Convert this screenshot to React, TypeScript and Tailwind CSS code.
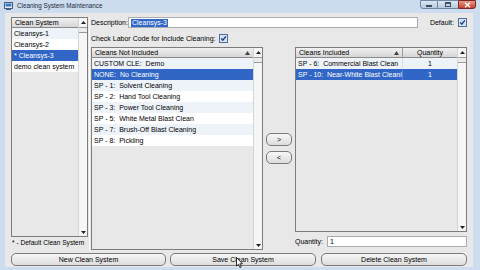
import React from "react";

const Tri = ({ down = false }: { down?: boolean }) => (
  <svg width="5" height="3" viewBox="0 0 5 3">
    <path d={down ? "M0 0H5L2.5 3Z" : "M0 3H5L2.5 0Z"} fill="#222" />
  </svg>
);

const SortTri = () => (
  <svg width="5" height="4" viewBox="0 0 5 4">
    <path d="M0 4H5L2.5 0Z" fill="#444" />
  </svg>
);

const Check = () => (
  <svg width="9" height="9" viewBox="0 0 9 9">
    <rect x="0.5" y="0.5" width="8" height="8" fill="#e3edf9" stroke="#4c6e9c" />
    <rect x="1.5" y="1.5" width="6" height="6" fill="#cfe0f4" />
    <path d="M2.2 4.4L3.8 6.2L6.9 2.3" fill="none" stroke="#1d3b73" strokeWidth="1.3" />
  </svg>
);

function Scrollbar() {
  return (
    <div className="w-[9px] flex flex-col bg-[#f6f6f6] border-l border-[#d4d4d4]">
      <div className="h-[10px] flex items-center justify-center border-b border-[#9a9a9a]">
        <Tri />
      </div>
      <div className="h-[5px] border-b border-[#9a9a9a] bg-[#ececec]" />
      <div className="flex-1" />
      <div className="h-[8px] flex items-center justify-center">
        <Tri down />
      </div>
    </div>
  );
}

const Row = ({ text, sel, alt }: { text: string; sel?: boolean; alt?: boolean }) => (
  <div
    className={
      "h-[11px] flex items-center pl-[2px] whitespace-pre overflow-hidden " +
      (sel ? "bg-[#3166c6] text-white" : alt ? "bg-[#eef3fa]" : "bg-white")
    }
  >
    {text}
  </div>
);

const Header = ({ children }: { children: React.ReactNode }) => (
  <div className="h-[10px] flex items-center px-[3px] bg-gradient-to-b from-[#f1f1f1] to-[#d6d6d6] border-b border-[#8a8a8a]">
    {children}
  </div>
);

const Btn = ({ children, className = "" }: { children: React.ReactNode; className?: string }) => (
  <div
    className={
      "h-[13px] flex items-center justify-center rounded-[5px] border border-[#7a7a7a] bg-gradient-to-b from-[#f6f6f6] to-[#dddddd] " +
      className
    }
  >
    {children}
  </div>
);

export default function App() {
  const notIncluded = [
    "CUSTOM CLE:  Demo",
    "NONE:  No Cleaning",
    "SP - 1:  Solvent Cleaning",
    "SP - 2:  Hand Tool Cleaning",
    "SP - 3:  Power Tool Cleaning",
    "SP - 5:  White Metal Blast Clean",
    "SP - 7:  Brush-Off Blast Cleaning",
    "SP - 8:  Pickling",
  ];
  return (
    <div className="relative w-[480px] h-[270px] flex flex-col bg-[#cddcee] text-[7px] leading-none text-black overflow-hidden font-['Liberation_Sans',Arial,sans-serif]">
      {/* Title bar */}
      <div className="h-[13px] flex items-start">
        <div className="pl-[4px] pt-[2px]">
          <svg width="9" height="8" viewBox="0 0 9 8">
            <rect x="0.5" y="0.5" width="8" height="6" fill="#e9eef5" stroke="#4a5f7a" />
            <rect x="1.5" y="1.5" width="6" height="3" fill="#3a79c9" />
            <rect x="2" y="7" width="5" height="1" fill="#4a5f7a" />
          </svg>
        </div>
        <div className="pl-[4px] pt-[3px] text-[6.3px] text-[#1b2a3a]">Cleaning System Maintenance</div>
        <div className="flex-1" />
        <div className="flex mr-[4px]">
          <div className="w-[18px] h-[9px] flex items-center justify-center border border-[#6f86a3] rounded-bl-[3px] bg-gradient-to-b from-[#dbe6f3] to-[#b7c9df]">
            <div className="w-[6px] h-[2px] bg-[#3c4e66] mt-[3px]" />
          </div>
          <div className="w-[20px] h-[9px] flex items-center justify-center border-y border-[#6f86a3] bg-gradient-to-b from-[#dbe6f3] to-[#b7c9df]">
            <div className="w-[6px] h-[5px] border border-[#3c4e66] border-t-2" />
          </div>
          <div className="w-[18px] h-[9px] flex items-center justify-center border border-[#7a2a22] rounded-br-[3px] bg-gradient-to-b from-[#e8988a] to-[#c43d2a]">
            <svg width="7" height="6" viewBox="0 0 7 6">
              <path d="M1 0.8L6 5.2M6 0.8L1 5.2" stroke="white" strokeWidth="1.4" />
            </svg>
          </div>
        </div>
      </div>

      {/* Body */}
      <div className="flex-1 ml-[5px] mr-[7px] mb-[3px] bg-[#e8e8e8] flex flex-col px-[6px] pt-[4px] pb-[1px]">
        <div className="h-[233px] flex">
          {/* Left column */}
          <div className="w-[77px] flex flex-col">
            <div className="h-[220px] flex border border-[#7d7d7d] bg-[#e8e8e8]">
              <div className="flex-1 flex flex-col">
                <Header>Clean System</Header>
                <Row text="Cleansys-1" alt />
                <Row text="Cleansys-2" />
                <Row text="* Cleansys-3" sel />
                <Row text="demo clean system" />
              </div>
              <Scrollbar />
            </div>
            <div className="flex-1 flex items-center pl-[1px] whitespace-nowrap text-[6.6px]">* - Default Clean System</div>
          </div>

          {/* splitter */}
          <div className="w-[3px] flex justify-center">
            <div className="w-[1px] bg-[#fafafa]" />
          </div>

          {/* Right column */}
          <div className="flex-1 flex flex-col">
            <div className="h-[11px] flex items-center">
              <div className="w-[37px]">Description:</div>
              <div className="w-[290px] h-[11px] flex items-center bg-white border border-[#a9acb2] pl-[2px]">
                <span className="bg-[#3168c7] text-white px-[1px] h-[8px] flex items-center">Cleansys-3</span>
              </div>
              <div className="flex-1" />
              <div className="mr-[4px]">Default:</div>
              <Check />
            </div>
            <div className="h-[10px] mt-[5px] flex items-center">
              <div className="mr-[3px]">Check Labor Code for Include Cleaning:</div>
              <Check />
            </div>
            <div className="flex-1 mt-[4px] flex">
              {/* Not included */}
              <div className="w-[172px] flex border border-[#7d7d7d] bg-[#e8e8e8]">
                <div className="flex-1 flex flex-col">
                  <Header>
                    <span className="flex-1">Cleans Not Included</span>
                    <SortTri />
                  </Header>
                  {notIncluded.map((t, i) => (
                    <Row key={t} text={t} sel={i === 1} alt={i % 2 === 0} />
                  ))}
                </div>
                <Scrollbar />
              </div>

              {/* move buttons */}
              <div className="w-[32px] flex flex-col items-center pt-[86px] gap-[5px]">
                <Btn className="w-[26px] h-[12px]">&gt;</Btn>
                <Btn className="w-[26px] h-[12px]">&lt;</Btn>
              </div>

              {/* Included */}
              <div className="flex-1 flex flex-col">
                <div className="h-[185px] flex border border-[#7d7d7d] bg-[#e8e8e8]">
                  <div className="flex-1 flex flex-col">
                    <div className="flex h-[10px] bg-gradient-to-b from-[#f1f1f1] to-[#d6d6d6] border-b border-[#8a8a8a]">
                      <div className="w-[107px] flex items-center px-[3px] border-r border-[#9a9a9a]">
                        <span className="flex-1">Cleans Included</span>
                        <SortTri />
                      </div>
                      <div className="flex-1 flex items-center justify-center">Quantity</div>
                    </div>
                    <div className="flex h-[11px] bg-[#eef3fa]">
                      <div className="w-[107px] flex items-center pl-[2px] whitespace-pre overflow-hidden border-r border-[#d8dde6]">SP - 6:  Commercial Blast Clean</div>
                      <div className="flex-1 flex items-center justify-center">1</div>
                    </div>
                    <div className="flex h-[11px] bg-[#3166c6] text-white">
                      <div className="w-[107px] flex items-center pl-[2px] whitespace-pre overflow-hidden border-r border-[#5a86d6]">SP - 10:  Near-White Blast Cleaning</div>
                      <div className="flex-1 flex items-center justify-center">1</div>
                    </div>
                  </div>
                  <Scrollbar />
                </div>
                <div className="h-[11px] mt-[4px] flex items-center">
                  <div className="w-[32px]">Quantity:</div>
                  <div className="flex-1 h-[11px] flex items-center bg-white border border-[#a9acb2] pl-[2px]">1</div>
                </div>
              </div>
            </div>
          </div>
        </div>

        {/* bottom buttons */}
        <div className="mt-[3px] flex">
          <Btn className="w-[155px]">New Clean System</Btn>
          <Btn className="w-[146px] ml-[4px]">Save Clean System</Btn>
          <Btn className="flex-1 ml-[5px]">Delete Clean System</Btn>
        </div>
      </div>

      {/* mouse cursor */}
      <svg className="absolute left-[236px] top-[257px]" width="7" height="11" viewBox="0 0 7 11">
        <path d="M0.5 0.5V9L2.5 7.2L4 10.5L5.3 9.9L3.9 6.8H6.5Z" fill="white" stroke="black" strokeWidth="0.8" strokeLinejoin="round" />
      </svg>
    </div>
  );
}
